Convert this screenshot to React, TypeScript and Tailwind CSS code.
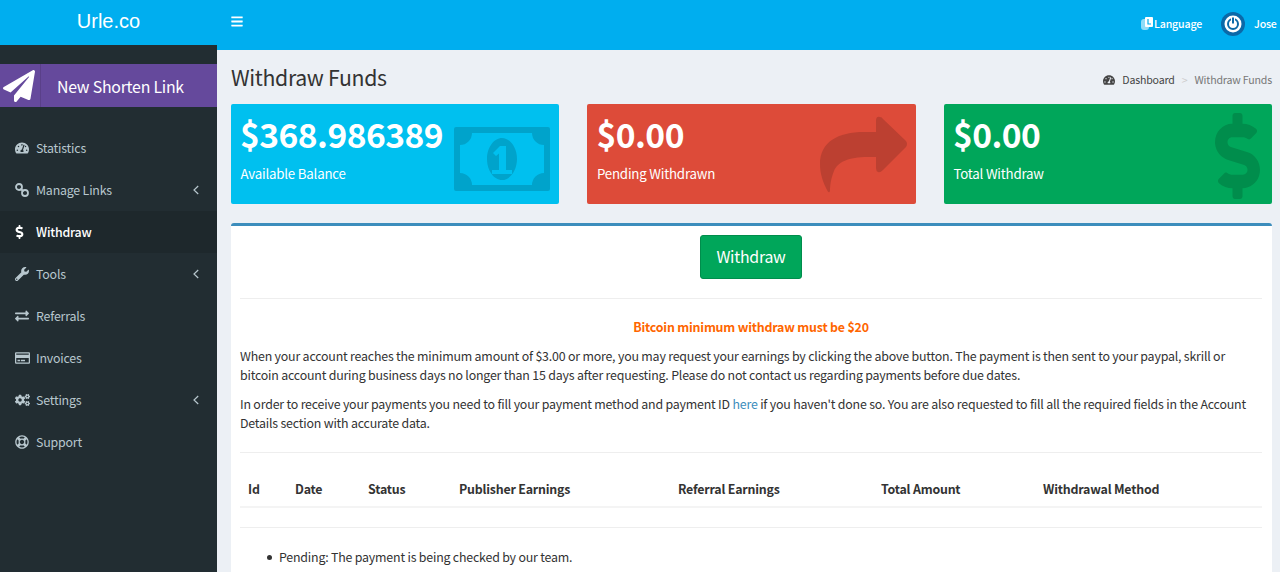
import React from "react";
import { FaTachometerAlt, FaDollarSign, FaWrench, FaExchangeAlt, FaRegCreditCard, FaCogs, FaRegLifeRing, FaPaperPlane, FaBars } from "react-icons/fa";

function Chain() {
  return (
    <svg viewBox="0 0 14 14" className="h-[14px] w-[14px]" fill="none" stroke="currentColor">
      <circle cx="4" cy="4" r="3" strokeWidth="1.800" />
      <circle cx="10" cy="10" r="3" strokeWidth="1.800" />
      <path d="M5.500 5.500l3 3" strokeWidth="2" />
    </svg>
  );
}

function Chevron() {
  return (
    <svg viewBox="0 0 6 10" className="h-[10px] w-[6px]" fill="none" stroke="currentColor" strokeWidth="1.200">
      <path d="M5.200 1L1 5l4.200 4" />
    </svg>
  );
}

const menu = [
  { label: "Statistics", icon: <FaTachometerAlt className="h-[14px] w-[14px]" /> },
  { label: "Manage Links", icon: <Chain />, arrow: true },
  { label: "Withdraw", icon: <FaDollarSign className="h-[14px] w-[9px]" />, active: true },
  { label: "Tools", icon: <FaWrench className="h-[14px] w-[14px]" />, arrow: true },
  { label: "Referrals", icon: <FaExchangeAlt className="h-[14px] w-[14px]" /> },
  { label: "Invoices", icon: <FaRegCreditCard className="h-[14px] w-[15px]" /> },
  { label: "Settings", icon: <FaCogs className="h-[14px] w-[15px]" />, arrow: true },
  { label: "Support", icon: <FaRegLifeRing className="h-[14px] w-[14px]" /> },
];

function Bill({ className }: { className?: string }) {
  return (
    <svg viewBox="0 0 96 64" className={className} fill="currentColor">
      <path
        fillRule="evenodd"
        d="M2 0h92a2 2 0 0 1 2 2v60a2 2 0 0 1-2 2H2a2 2 0 0 1-2-2V2a2 2 0 0 1 2-2zM6 18v28a12 12 0 0 1 12 12h60a12 12 0 0 1 12-12V18A12 12 0 0 1 78 6H18A12 12 0 0 1 6 18z"
      />
      <path
        fillRule="evenodd"
        d="M48 11c8 0 15 9.500 15 21s-7 21-15 21-15-9.500-15-21 7-21 15-21zM38 43v4h20v-4h-6V19h-6l-7 7 3 3 3-2.500V43z"
      />
    </svg>
  );
}

function Share({ className }: { className?: string }) {
  return (
    <svg viewBox="0 0 88 78" className={className} fill="currentColor">
      <path d="M56 5Q56 0 60 1Q62 1 63 3L86 25Q88 28 86 31L63 54Q60 57 58 56Q56 55 56 52V41H48C28 41 18 46 14 55C11 62 10 70 10 75Q9 78 7 74C3 66 0 58 0 48C0 26 18 16 44 16H56Z" />
    </svg>
  );
}

function StatBox({ value, label, bg, children }: { value: string; label: string; bg: string; children: React.ReactNode }) {
  return (
    <div className={`relative h-[100px] overflow-hidden rounded-[2px] p-[10px] text-white ${bg}`}>
      <div className="-ml-px text-[33.600px] leading-[40px] tracking-[-0.54px] font-bold whitespace-nowrap">{value}</div>
      <div className="-ml-[0.500px] mt-[9px] text-[13.300px] leading-[21px] tracking-[-0.21px]">{label}</div>
      {children}
    </div>
  );
}

const columns = [
  ["Id", "w-[47px]"],
  ["Date", "w-[73px]"],
  ["Status", "w-[91px]"],
  ["Publisher Earnings", "w-[219px]"],
  ["Referral Earnings", "w-[203px]"],
  ["Total Amount", "w-[162px]"],
  ["Withdrawal Method", "w-[227px]"],
];

export default function App() {
  return (
    <div className="flex h-[572px] w-[1280px] overflow-hidden bg-[#ecf0f5] font-['Noto_Sans_CJK_SC',sans-serif] text-[12.400px] leading-[20px] tracking-[-0.2px] text-[#333]">
      <aside className="flex w-[217px] shrink-0 flex-col bg-[#222d32]">
        <div className="flex h-[45px] shrink-0 items-center justify-center bg-[#00aeef] pb-[3px] font-['Liberation_Sans',sans-serif] text-[20px] tracking-normal text-white">
          Urle.co
        </div>
        <div className="mt-[19px] flex h-[43px] shrink-0 items-center bg-[#65499c] text-white">
          <div className="flex h-full w-[41px] items-center justify-center border-r border-[#5a4089] pr-[2px]">
            <FaPaperPlane className="h-[32px] w-[32px]" />
          </div>
          <div className="flex-1 pl-[16px] pt-[2px] text-[15.900px] tracking-[-0.25px]">New Shorten Link</div>
        </div>
        <nav className="mt-[20px] flex flex-col">
          {menu.map(({ label, icon, arrow, active }) => (
            <div
              key={label}
              className={`flex h-[42px] items-center pl-[15px] pr-[18px] ${active ? "bg-[#1e282c] font-medium text-white" : "text-[#b8c7ce]"}`}
            >
              <span className="flex w-[21px] shrink-0 items-center">{icon}</span>
              <span className="flex-1">{label}</span>
              {arrow && <Chevron />}
            </div>
          ))}
        </nav>
      </aside>

      <div className="flex min-w-0 flex-1 flex-col">
        <header className="flex h-[50px] shrink-0 items-center bg-[#00aeef] pr-[4px] text-white">
          <FaBars className="mb-[8px] ml-[14px] h-[13px] w-[12px]" />
          <div className="ml-auto flex items-center pb-[3px] text-[10.600px] tracking-[-0.17px]">
            <svg viewBox="0 0 12 13" className="mr-px h-[13px] w-[12px]">
              <rect x="0" y="2" width="8" height="11" rx="3" fill="#8fdcf8" />
              <rect x="4" y="0" width="8" height="10" rx="1" fill="#fff" />
              <path d="M7 2v5h3" fill="none" stroke="#00aeef" strokeWidth="1.200" />
            </svg>
            <span className="font-medium">Language</span>
            <svg viewBox="0 0 24 24" className="ml-[19px] h-[24px] w-[24px]">
              <circle cx="12" cy="12" r="12" fill="#0b69a8" />
              <circle cx="12" cy="12" r="8.500" fill="#fff" />
              <circle cx="12" cy="12" r="5" fill="none" stroke="#0b69a8" strokeWidth="2" />
              <path d="M12 4v8" stroke="#fff" strokeWidth="4" />
              <path d="M12 5.500v6" stroke="#0b69a8" strokeWidth="2" />
            </svg>
            <span className="ml-[9px] w-[22px] font-medium">Jose</span>
          </div>
        </header>

        <main className="flex min-h-0 flex-1 flex-col pl-[14px] pr-[8px]">
          <div className="flex h-[54px] shrink-0 items-center justify-between">
            <h1 className="text-[21.250px] tracking-[-0.34px]">Withdraw Funds</h1>
            <div className="flex items-center pt-[6px] text-[10.600px] tracking-[-0.17px]">
              <FaTachometerAlt className="h-[12px] w-[12px] text-[#444]" />
              <span className="ml-[7px] text-[#444]">Dashboard</span>
              <span className="mx-[7px] text-[#ccc]">&gt;</span>
              <span className="text-[#777]">Withdraw Funds</span>
            </div>
          </div>

          <section className="grid shrink-0 grid-cols-3 gap-[28.400px]">
            <StatBox value="$368.986389" label="Available Balance" bg="bg-[#00c0ef]">
              <Bill className="absolute right-[9px] top-[23px] h-[64px] w-[96px] text-[#00a3cb]" />
            </StatBox>
            <StatBox value="$0.00" label="Pending Withdrawn" bg="bg-[#dd4b39]">
              <Share className="absolute right-[8px] top-[12px] h-[78px] w-[88px] text-[#bc4031]" />
            </StatBox>
            <StatBox value="$0.00" label="Total Withdraw" bg="bg-[#00a65a]">
              <FaDollarSign preserveAspectRatio="none" className="absolute right-[12px] top-[9px] h-[86px] w-[45px] text-[#008d4c]" />
            </StatBox>
          </section>

          <section className="mt-[19px] flex-1 rounded-t-[3px] border-t-[3px] border-[#3c8dbc] bg-white pl-[9px] pr-[10px]">
            <div className="flex justify-center pt-[9px]">
              <button className="flex h-[44px] w-[102px] items-center justify-center rounded-[3px] border border-[#008d4c] bg-[#00a65a] text-[15.900px] tracking-[-0.25px] text-white">
                Withdraw
              </button>
            </div>
            <hr className="mt-[19px] border-t border-[#eee]" />
            <p className="mt-[18px] text-center font-bold text-[#ff6600]">Bitcoin minimum withdraw must be $20</p>
            <p className="mt-[10px] leading-[19px]">
              When your account reaches the minimum amount of $3.00 or more, you may request your earnings by clicking the above button. The payment is then sent to your paypal, skrill or bitcoin account during business days no longer than 15 days after requesting. Please do not contact us regarding payments before due dates.
            </p>
            <p className="mt-[10px] leading-[19px]">
              In order to receive your payments you need to fill your payment method and payment ID <a className="text-[#3c8dbc]">here</a> if you haven't done so. You are also requested to fill all the required fields in the Account Details section with accurate data.
            </p>
            <hr className="mt-[19px] border-t border-[#eee]" />
            <table className="mt-[18px] w-full table-fixed border-b-2 border-[#f4f4f4]">
              <thead>
                <tr>
                  {columns.map(([name, width]) => (
                    <th key={name} className={`${width} px-[8px] pb-[7px] pt-[8px] text-left font-bold`}>{name}</th>
                  ))}
                </tr>
              </thead>
            </table>
            <hr className="mt-[19px] border-t border-[#eee]" />
            <ul className="mt-[19px] pl-[39px] leading-[20px]">
              <li className="flex items-center">
                <span className="-ml-[12px] mr-[7px] h-[5px] w-[5px] rounded-full bg-[#333]" />
                Pending: The payment is being checked by our team.
              </li>
              <li>Approved: The payment has been approved and is waiting to be sent.</li>
            </ul>
          </section>
        </main>
      </div>
    </div>
  );
}
